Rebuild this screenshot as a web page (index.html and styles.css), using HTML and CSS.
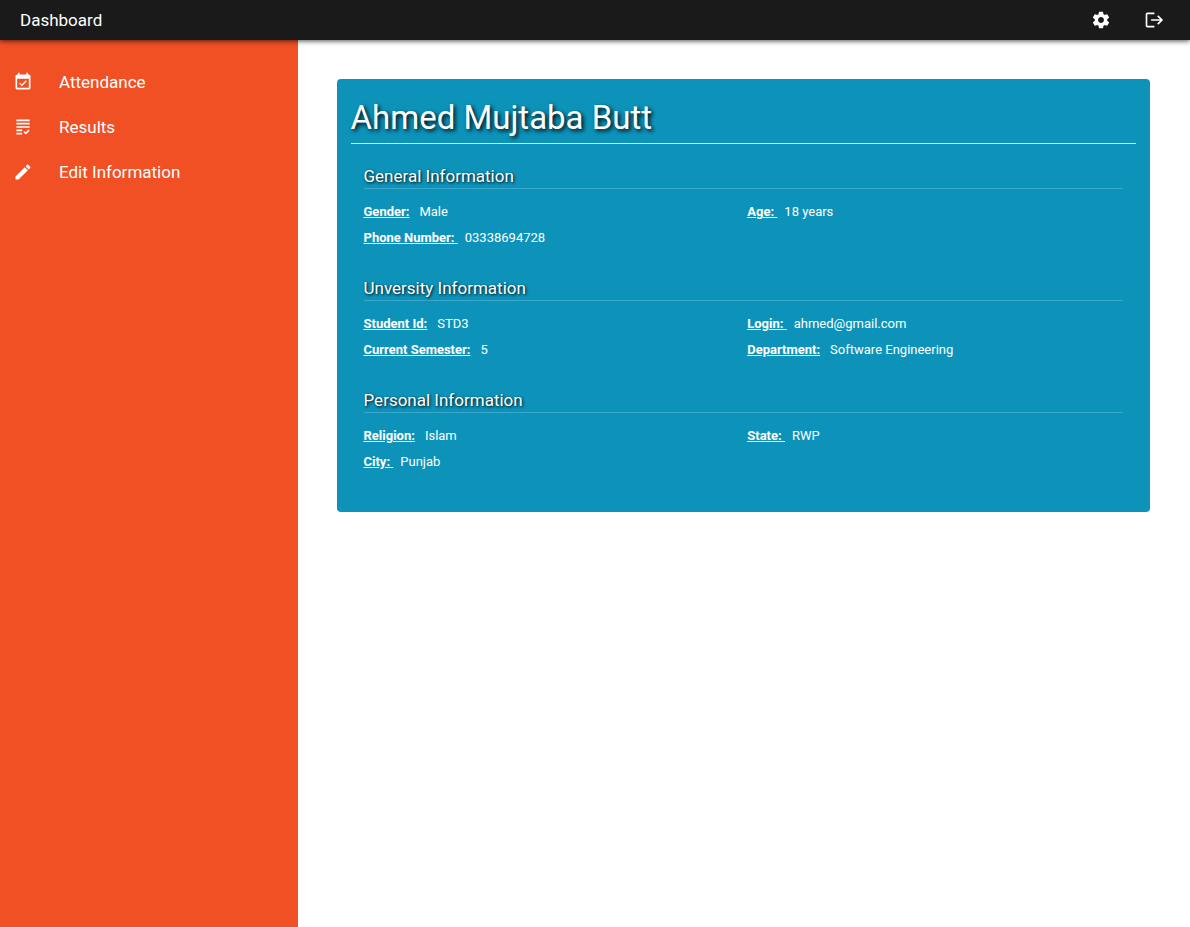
FILE: index.html
```html
<!DOCTYPE html>
<html lang="en">
<head>
  <meta charset="utf-8">
  <meta name="viewport" content="width=device-width, initial-scale=1">
  <title>Dashboard</title>
  <link rel="stylesheet" href="styles.css">
</head>
<body>
  <header class="topbar">
    <a class="brand" href="#">Dashboard</a>
    <div class="actions">
      <button class="icon-button" type="button" aria-label="Settings">
        <svg class="icon" viewBox="0 0 24 24" fill="currentColor" aria-hidden="true"><path d="M19.43 12.98c.04-.32.07-.64.07-.98s-.03-.66-.07-.98l2.11-1.65c.19-.15.24-.42.12-.64l-2-3.46c-.12-.22-.39-.3-.61-.22l-2.49 1c-.52-.4-1.08-.73-1.69-.98l-.38-2.65C14.46 2.18 14.25 2 14 2h-4c-.25 0-.46.18-.49.42l-.38 2.65c-.61.25-1.17.59-1.69.98l-2.49-1c-.23-.09-.49 0-.61.22l-2 3.46c-.13.22-.07.49.12.64l2.11 1.65c-.04.32-.07.65-.07.98s.03.66.07.98l-2.11 1.65c-.19.15-.24.42-.12.64l2 3.46c.12.22.39.3.61.22l2.49-1c.52.4 1.08.73 1.69.98l.38 2.65c.03.24.24.42.49.42h4c.25 0 .46-.18.49-.42l.38-2.65c.61-.25 1.17-.59 1.69-.98l2.49 1c.23.09.49 0 .61-.22l2-3.46c.12-.22.07-.49-.12-.64l-2.11-1.65zM12 15.5c-1.93 0-3.5-1.57-3.5-3.5s1.57-3.5 3.5-3.5 3.5 1.57 3.5 3.5-1.57 3.5-3.5 3.5z"/></svg>
      </button>
      <button class="icon-button" type="button" aria-label="Log out">
        <svg class="icon" viewBox="0 0 24 24" fill="none" stroke="currentColor" stroke-width="2" aria-hidden="true"><path d="M12.500 4H4Q3 4 3 5V19Q3 20 4 20H12.500M8.500 12H21M16.500 7L21.500 12L16.500 17"/></svg>
      </button>
    </div>
  </header>
  <div class="layout">
    <nav class="sidebar" aria-label="Main">
      <a class="nav-link" href="#">
        <svg class="icon" viewBox="0 0 24 24" fill="currentColor" aria-hidden="true"><path d="M16.530 11.060L15.470 10l-4.880 4.880-2.120-2.120-1.060 1.060L10.590 17l5.940-5.940zM19 3h-1V1h-2v2H8V1H6v2H5c-1.110 0-1.990.9-1.990 2L3 19c0 1.100.89 2 2 2h14c1.100 0 2-.9 2-2V5c0-1.100-.9-2-2-2zm0 16H5V8h14v11z"/></svg>
        <span>Attendance</span>
      </a>
      <a class="nav-link" href="#">
        <svg class="icon" viewBox="0 0 24 24" fill="currentColor" aria-hidden="true"><path d="M4 7h16v2H4V7zM4 13h16v-2H4V13zM4 17h7v-2H4V17zM4 21h7v-2H4V21zM15.410 18.170L14 16.750l-1.410 1.410L15.410 21L20 16.420L18.580 15L15.410 18.170zM4 3v2h16V3H4z"/></svg>
        <span>Results</span>
      </a>
      <a class="nav-link" href="#">
        <svg class="icon" viewBox="0 0 24 24" fill="currentColor" aria-hidden="true"><path d="M3 17.250V21h3.750L17.810 9.940l-3.750-3.750L3 17.250zM20.710 7.040c.39-.39.39-1.020 0-1.410l-2.340-2.340c-.39-.39-1.020-.39-1.410 0l-1.830 1.830 3.750 3.750 1.830-1.830z"/></svg>
        <span>Edit Information</span>
      </a>
    </nav>
    <main class="content">
      <article class="profile">
        <h1 class="profile-name">Ahmed Mujtaba Butt</h1>
        <section class="info">
          <h2 class="info-title">General Information</h2>
          <dl class="fields">
            <div class="field"><dt>Gender:</dt><dd>Male</dd></div>
            <div class="field"><dt class="spaced">Age: </dt><dd>18 years</dd></div>
            <div class="field"><dt class="spaced">Phone Number: </dt><dd>03338694728</dd></div>
          </dl>
        </section>
        <section class="info">
          <h2 class="info-title">Unversity Information</h2>
          <dl class="fields">
            <div class="field"><dt>Student Id:</dt><dd>STD3</dd></div>
            <div class="field"><dt class="spaced">Login: </dt><dd>ahmed@gmail.com</dd></div>
            <div class="field"><dt>Current Semester:</dt><dd>5</dd></div>
            <div class="field"><dt>Department:</dt><dd>Software Engineering</dd></div>
          </dl>
        </section>
        <section class="info">
          <h2 class="info-title">Personal Information</h2>
          <dl class="fields">
            <div class="field"><dt>Religion:</dt><dd>Islam</dd></div>
            <div class="field"><dt class="spaced">State: </dt><dd>RWP</dd></div>
            <div class="field"><dt class="spaced">City: </dt><dd>Punjab</dd></div>
          </dl>
        </section>
      </article>
    </main>
  </div>
</body>
</html>
```
FILE: styles.css
```css
* {
  box-sizing: border-box;
}

body {
  display: flex;
  flex-direction: column;
  min-height: 100vh;
  margin: 0;
  background: #fff;
  color: #fff;
  font-family: Roboto, "Liberation Sans", sans-serif;
  font-size: 13px;
}

.topbar {
  position: relative;
  z-index: 1;
  display: flex;
  align-items: center;
  justify-content: space-between;
  height: 40px;
  padding: 0 20px;
  background: #1a1a1a;
  box-shadow: 0 1px 5px rgba(0, 0, 0, 0.7);
}

.brand,
.nav-link {
  color: #fff;
  font-size: 17px;
  line-height: 24px;
  text-decoration: none;
}

.actions {
  display: flex;
  gap: 20px;
}

.icon-button {
  display: flex;
  align-items: center;
  justify-content: center;
  width: 33px;
  height: 33px;
  padding: 0;
  border: 0;
  background: none;
  color: #fff;
  cursor: pointer;
}

.icon {
  flex: none;
  width: 20px;
  height: 20px;
}

.layout {
  display: flex;
  flex: 1;
}

.sidebar {
  display: flex;
  flex: 0 0 25%;
  flex-direction: column;
  gap: 1px;
  padding-top: 20px;
  background: #f15025;
}

.nav-link {
  display: flex;
  align-items: center;
  gap: 26px;
  padding: 10px 13px;
}

.content {
  flex: 1;
  min-width: 0;
  padding: 39px 40px 39px 39px;
}

.profile {
  padding: 17px 14px 12px;
  border-radius: 4px;
  background: #0d93ba;
}

.profile-name {
  margin: 0 0 20px;
  padding-bottom: 3px;
  border-bottom: 1px solid #d3ecf3;
  font-size: 33px;
  font-weight: 400;
  line-height: 44px;
  text-shadow: 2px 2px 4px #000;
}

.info {
  margin: 0 13px 25px;
}

.info-title {
  margin: 0 0 10px;
  border-bottom: 1px solid #3aa8c8;
  font-size: 17px;
  font-weight: 400;
  line-height: 24px;
  text-shadow: 1px 1px 3px #000;
}

.fields {
  display: grid;
  grid-template-columns: 1fr 1fr;
  column-gap: 8px;
  margin: 0;
  line-height: 26px;
}

.field {
  display: flex;
  gap: 10px;
}

.field dt {
  font-weight: 700;
  text-decoration: underline;
  white-space: pre;
}

.field .spaced {
  margin-right: -3px;
}

.field dd {
  margin: 0;
}
```
